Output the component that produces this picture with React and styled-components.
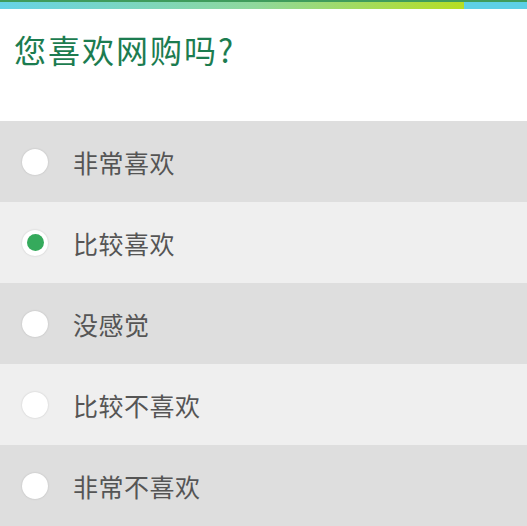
import React, { useState } from 'react';
import styled, { createGlobalStyle } from 'styled-components';

const GlobalStyle = createGlobalStyle`
	html, body {
		margin: 0;
		padding: 0;
		background: #ffffff;
	}
	body {
		font-family: "Noto Sans CJK SC", "Liberation Sans", sans-serif;
	}
`;

const Page = styled.div`
	width: 527px;
	height: 526px;
	display: flex;
	flex-direction: column;
	overflow: hidden;
`;

const TopLine = styled.div`
	height: 2px;
	background: #3f9c5c;
`;

const Progress = styled.div`
	height: 7px;
	display: grid;
	grid-template-columns: 464px 1fr;
	background: #5dd0e6;
`;

const ProgressFill = styled.div`
	background: linear-gradient(90deg, #66d3e6 0%, #8fd89c 55%, #b6de22 100%);
`;

const Header = styled.div`
	height: 112px;
	padding: 20px 0 0 14px;
	box-sizing: border-box;
`;

const Title = styled.h1`
	margin: 0;
	font-size: 32px;
	font-weight: 400;
	line-height: 40px;
	color: #1c7c50;
	letter-spacing: 2px;
`;

const Options = styled.div`
	display: flex;
	flex-direction: column;
`;

const Row = styled.label`
	height: 81px;
	display: flex;
	align-items: center;
	gap: 25px;
	padding-left: 22px;
	background: ${p => (p.$alt ? '#efefef' : '#dedede')};
	cursor: pointer;
`;

const Radio = styled.span`
	width: 26px;
	height: 26px;
	border-radius: 50%;
	background: #ffffff;
	box-shadow: 0 0 2px rgba(0, 0, 0, 0.18);
	display: flex;
	align-items: center;
	justify-content: center;
	&::after {
		content: '';
		width: 17px;
		height: 17px;
		border-radius: 50%;
		background: #35aa5c;
		display: ${p => (p.$on ? 'block' : 'none')};
	}
`;

const Label = styled.span`
	font-size: 25px;
	color: #555555;
	letter-spacing: 0.5px;
	line-height: 1;
	padding-top: 2px;
`;

const options = ['非常喜欢', '比较喜欢', '没感觉', '比较不喜欢', '非常不喜欢'];

export default function App() {
	const [picked, setPicked] = useState(1);
	return (
		<Page>
			<GlobalStyle />
			<TopLine />
			<Progress>
				<ProgressFill />
			</Progress>
			<Header>
				<Title>您喜欢网购吗?</Title>
			</Header>
			<Options>
				{options.map((o, i) => (
					<Row key={o} $alt={i % 2 === 1} onClick={() => setPicked(i)}>
						<Radio $on={picked === i} />
						<Label>{o}</Label>
					</Row>
				))}
			</Options>
		</Page>
	);
}
